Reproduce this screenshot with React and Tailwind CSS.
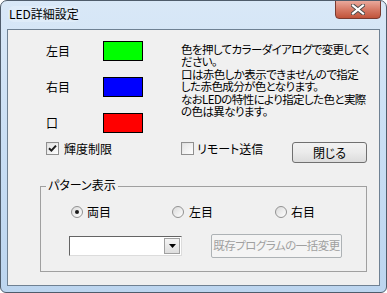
import React from "react";

const jp = "font-['Noto_Sans_CJK_JP','Noto_Sans',sans-serif] [font-feature-settings:'palt']";

function CheckBox({ checked }) {
  return (
    <div className="w-[13px] h-[13px] border border-[#8f8f8f] bg-gradient-to-br from-[#dcdcdc] to-[#ffffff] p-[1px] flex items-center justify-center">
      <div className="w-full h-full bg-gradient-to-br from-[#e6e6e6] to-[#fbfbfb] flex items-center justify-center">
        {checked && (
          <svg width="9" height="9" viewBox="0 0 9 9">
            <path d="M1 4.2 L3.4 6.6 L8 1.6" stroke="#1d1d1d" strokeWidth="2" fill="none" />
          </svg>
        )}
      </div>
    </div>
  );
}

function Radio({ checked }) {
  return (
    <div className="w-[12px] h-[12px] rounded-full border border-[#929292] bg-gradient-to-br from-[#dadada] to-[#ffffff] flex items-center justify-center">
      {checked && <div className="w-[4px] h-[4px] rounded-full bg-[#1a1a1a]" />}
    </div>
  );
}

export default function App() {
  return (
    <div className={`w-[387px] h-[293px] ${jp} text-[12px] text-black`}>
      <div className="relative w-[387px] h-[293px] rounded-t-[7px] rounded-b-[6px] border border-[#4f5c6b] bg-gradient-to-b from-[#d9e8f7] via-[#c9def4] to-[#bcd5ef] overflow-hidden flex flex-col">
        <div className="h-[28px] shrink-0 flex items-center pl-[7px] pb-[2px] text-[12px] leading-none">
          <span className="bg-[#e3eefa]/70 rounded-[6px] px-[1px] py-[2px]">LED詳細設定</span>
        </div>
        <div className="absolute top-[-1px] right-[5px] w-[46px] h-[19px] rounded-b-[4px] border border-[#7a3b30] bg-gradient-to-b from-[#e9a99c] via-[#d67a66] to-[#c0533a] flex items-center justify-center">
          <svg width="14" height="11" viewBox="0 0 14 11">
            <path d="M2 1.5 L12 9.5 M12 1.5 L2 9.5" stroke="#4a4a4a" strokeWidth="4" strokeLinecap="square" fill="none" />
            <path d="M2 1.5 L12 9.5 M12 1.5 L2 9.5" stroke="#ffffff" strokeWidth="2.2" strokeLinecap="square" fill="none" />
          </svg>
        </div>
        <div className="mx-[6px] h-[257px] border border-[#6f8193] bg-[#f0f0f0]">
          {/* top section */}
          <div className="flex pt-[11px]">
            <div className="flex flex-col gap-[16px] pl-[38px]">
              {[
                ["左目", "bg-[#00ff00]"],
                ["右目", "bg-[#0000ff]"],
                ["口", "bg-[#ff0000]"],
              ].map(([label, color]) => (
                <div key={label} className="flex items-center h-[20px]">
                  <span className="w-[57px] leading-none">{label}</span>
                  <div className={`w-[40px] h-[20px] border border-black ${color}`} />
                </div>
              ))}
            </div>
            <div className="ml-[38px] text-[11.5px] leading-[12.4px] tracking-[-0.6px] whitespace-nowrap pt-[2px]">
              色を押してカラーダイアログで変更してく
              <br />
              ださい。
              <br />
              口は赤色しか表示できませんので指定
              <br />
              した赤色成分が色となります。
              <br />
              なおLEDの特性により指定した色と実際
              <br />
              の色は異なります。
            </div>
          </div>
          {/* checkbox row */}
          <div className="flex items-start mt-[9px] h-[21px]">
            <div className="flex items-center pl-[38px] w-[173px] h-[13px]">
              <CheckBox checked />
              <span className="ml-[5px] leading-none">輝度制限</span>
            </div>
            <div className="flex items-center w-[111px] h-[13px]">
              <CheckBox />
              <span className="ml-[3px] leading-none">リモート送信</span>
            </div>
            <div className="w-[75px] h-[21px] border border-[#707070] rounded-[3px] bg-gradient-to-b from-[#f2f2f2] via-[#ebebeb] to-[#dcdcdc] flex items-center justify-center leading-none">
              閉じる
            </div>
          </div>
          {/* group */}
          <div className="relative ml-[32px] mt-[23px] w-[327px] h-[86px] border border-[#a0a0a0]">
            <span className="absolute left-[5px] top-[-8px] bg-[#f0f0f0] px-[2px] leading-none">パターン表示</span>
            <div className="flex items-center pt-[18px] h-[31px]">
              <div className="flex items-center pl-[30px] w-[131px]">
                <Radio checked />
                <span className="ml-[4px] leading-none">両目</span>
              </div>
              <div className="flex items-center w-[103px]">
                <Radio />
                <span className="ml-[5px] leading-none">左目</span>
              </div>
              <div className="flex items-center">
                <Radio />
                <span className="ml-[4px] leading-none">右目</span>
              </div>
            </div>
            <div className="flex items-center mt-[16px] pl-[28px]">
              <div className="w-[113px] h-[20px] border border-t-[#646464] border-l-[#646464] border-b-[#dcdcdc] border-r-[#dcdcdc] bg-white flex justify-end p-[1px]">
                <div className="w-[16px] h-full border border-[#a0a0a0] bg-gradient-to-b from-[#f4f4f4] to-[#dedede] flex items-center justify-center">
                  <svg width="7" height="4" viewBox="0 0 7 4">
                    <path d="M0 0 H7 L3.5 4 Z" fill="#000" />
                  </svg>
                </div>
              </div>
              <div className="ml-[29px] w-[131px] h-[24px] border border-[#adb2b5] rounded-[2px] bg-[#f4f4f4] flex items-center justify-center text-[#a0a0a0] text-[11.5px] tracking-[-0.5px] whitespace-nowrap leading-none">
                既存プログラムの一括変更
              </div>
            </div>
          </div>
        </div>
      </div>
    </div>
  );
}
